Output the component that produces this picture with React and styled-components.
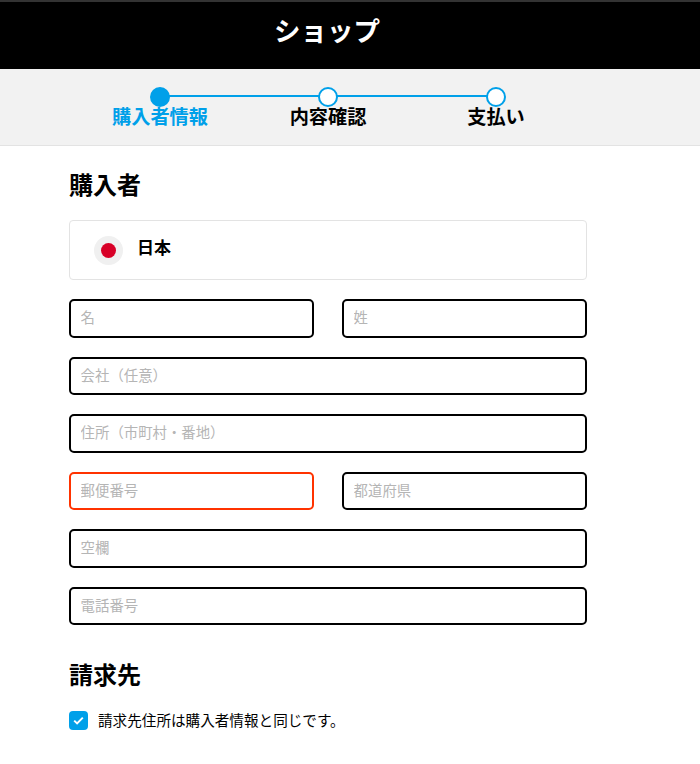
import styled, { createGlobalStyle } from 'styled-components';

const GlobalStyle = createGlobalStyle`
  html, body {
    margin: 0;
    padding: 0;
    background: #fff;
    font-family: "Noto Sans CJK JP", "Noto Sans", sans-serif;
    color: #000;
  }
  * {
    box-sizing: border-box;
  }
`;

const STEPS = [
  { label: '購入者情報', done: true },
  { label: '内容確認' },
  { label: '支払い' },
];

const Step = ({ label, done, last }) => (
  <StepItem $last={last}>
    <StepDot $done={done} />
    <StepLabel $done={done}>{label}</StepLabel>
  </StepItem>
);

const App = () => {
  return (
    <Page>
      <GlobalStyle />
      <Header>
        <Title>ショップ</Title>
      </Header>
      <Stepper>
        <StepList>
          {STEPS.map((step, idx) => (
            <Step key={step.label} {...step} last={idx === STEPS.length - 1} />
          ))}
        </StepList>
      </Stepper>
      <Form>
        <Heading>購入者</Heading>
        <Country>
          <Flag />
          <CountryName>日本</CountryName>
        </Country>
        <Fields>
          <Row>
            <Input placeholder="名" />
            <Input placeholder="姓" />
          </Row>
          <Input placeholder="会社（任意）" />
          <Input placeholder="住所（市町村・番地）" />
          <Row>
            <Input placeholder="郵便番号" $error />
            <Input placeholder="都道府県" />
          </Row>
          <Input placeholder="空欄" />
          <Input placeholder="電話番号" />
        </Fields>
        <BillingHeading>請求先</BillingHeading>
        <CheckRow>
          <CheckBox>
            <svg width="11" height="9" viewBox="0 0 11 9" fill="none">
              <path d="M1.2 4.6 4.1 7.4 9.8 1.6" stroke="#fff" strokeWidth="2" />
            </svg>
          </CheckBox>
          <CheckLabel>請求先住所は購入者情報と同じです。</CheckLabel>
        </CheckRow>
      </Form>
    </Page>
  );
};

export default App;

const Page = styled.div`
  width: 100%;
  min-height: 764px;
`;

const Header = styled.header`
  height: 69px;
  padding: 0 46px 11px 0;
  background: #000;
  border-top: 2px solid #333;
  display: flex;
  align-items: center;
  justify-content: center;
`;

const Title = styled.h1`
  margin: 0;
  color: #fff;
  font-size: 26.5px;
  line-height: 1;
  font-weight: 700;
`;

const Stepper = styled.div`
  height: 77px;
  padding: 18px 0 0 76px;
  background: #f2f2f2;
  border-bottom: 1px solid #e3e3e3;
`;

const StepList = styled.div`
  width: 504px;
  display: grid;
  grid-template-columns: repeat(3, 1fr);
`;

const StepItem = styled.div`
  position: relative;
  display: flex;
  flex-direction: column;
  align-items: center;

  &::after {
    content: '';
    display: ${({ $last }) => ($last ? 'none' : 'block')};
    position: absolute;
    top: 8px;
    left: 50%;
    width: 100%;
    height: 2px;
    background: #00a0e9;
  }
`;

const StepDot = styled.span`
  position: relative;
  z-index: 1;
  width: 20px;
  height: 20px;
  border-radius: 50%;
  border: 2px solid #00a0e9;
  background: ${({ $done }) => ($done ? '#00a0e9' : '#fff')};
`;

const StepLabel = styled.span`
  font-size: 19.2px;
  line-height: 18px;
  font-weight: 700;
  color: ${({ $done }) => ($done ? '#00a0e9' : '#000')};
`;

const Form = styled.main`
  width: 518px;
  margin-left: 69px;
  padding-top: 22px;
`;

const Heading = styled.h2`
  margin: 0;
  font-size: 24px;
  line-height: 32px;
  font-weight: 700;
`;

const Country = styled.div`
  height: 60px;
  margin-top: 20px;
  padding-left: 24px;
  border: 1px solid #e3e3e3;
  border-radius: 4px;
  display: flex;
  align-items: center;
  gap: 14px;
`;

const Flag = styled.span`
  width: 29px;
  height: 29px;
  border-radius: 50%;
  background: #f0f0f0;
  display: flex;
  align-items: center;
  justify-content: center;

  &::before {
    content: '';
    width: 15px;
    height: 15px;
    border-radius: 50%;
    background: #d80027;
  }
`;

const CountryName = styled.span`
  padding-bottom: 7px;
  font-size: 17px;
  line-height: 20px;
  font-weight: 700;
`;

const Fields = styled.div`
  margin-top: 19px;
  display: flex;
  flex-direction: column;
  gap: 19px;
`;

const Row = styled.div`
  display: grid;
  grid-template-columns: 1fr 1fr;
  gap: 28px;
`;

const Input = styled.input`
  display: block;
  width: 100%;
  height: 38.5px;
  padding: 0 10px 3px 9.6px;
  background: #fff;
  border: 2px solid ${({ $error }) => ($error ? '#ff3300' : '#000')};
  border-radius: 5px;
  outline: none;
  font-family: inherit;
  font-size: 14.4px;

  &::placeholder {
    color: #b5b5b5;
    opacity: 1;
  }
`;

const BillingHeading = styled(Heading)`
  margin-top: 33px;
`;

const CheckRow = styled.label`
  margin-top: 20px;
  display: flex;
  align-items: center;
  gap: 10px;
`;

const CheckBox = styled.span`
  width: 19px;
  height: 19px;
  border-radius: 4px;
  background: #00a0e9;
  display: flex;
  align-items: center;
  justify-content: center;
`;

const CheckLabel = styled.span`
  padding-bottom: 1px;
  font-size: 14.6px;
  line-height: 20px;
`;
